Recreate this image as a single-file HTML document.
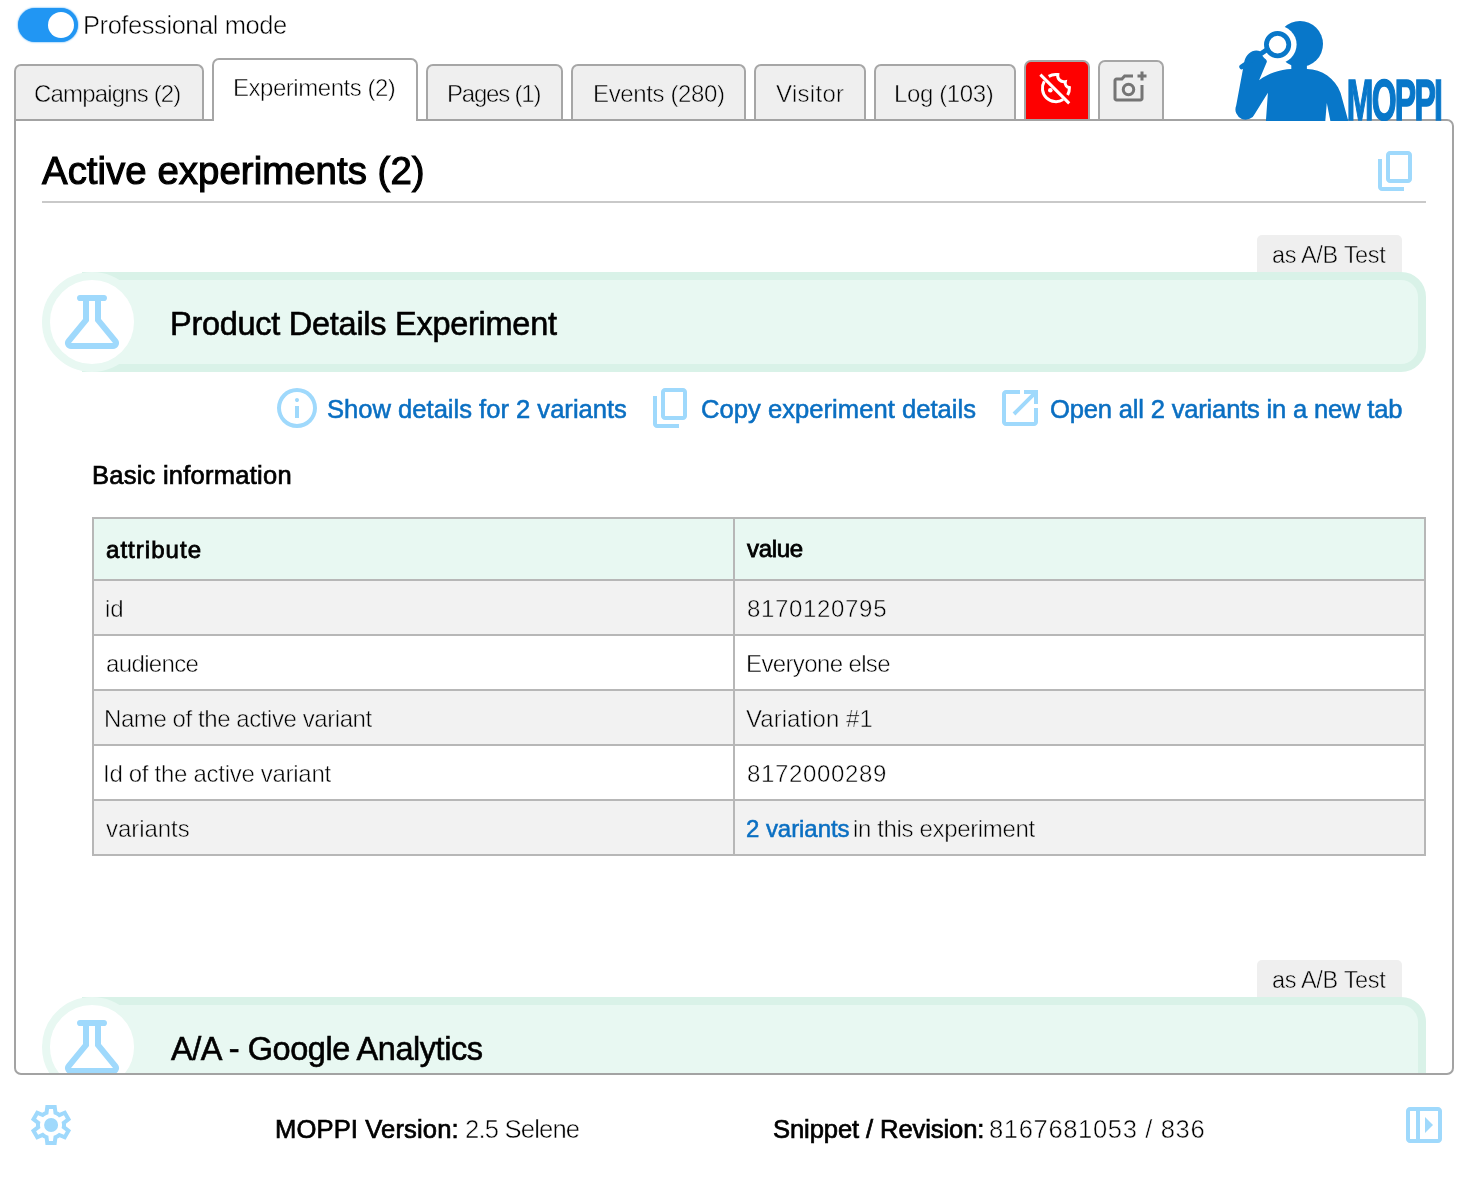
<!DOCTYPE html>
<html lang="en">
<head>
<meta charset="utf-8">
<title>MOPPI</title>
<style>
html,body{margin:0;padding:0;}
body{width:1470px;height:1180px;overflow:hidden;background:#fff;position:relative;
  font-family:"Liberation Sans",sans-serif;color:#000;font-size:24px;}
.abs{position:absolute;}
.t{position:absolute;white-space:nowrap;line-height:1;transform-origin:0 0;will-change:transform;}
svg{display:block;}
.ic{fill:#9fd9fc;}

/* toggle */
#toggle{left:18px;top:8px;width:60px;height:34px;border-radius:17px;background:#2196f3;box-shadow:0 0 2px #2196f3;}
#toggle i{position:absolute;left:30px;top:4px;width:26px;height:26px;border-radius:50%;background:#fff;}

/* tabs */
.tab{position:absolute;top:64px;height:55px;box-sizing:border-box;border:2px solid #a6a6a6;border-bottom:none;
  border-radius:7px 7px 0 0;background:#efefef;}
.tab.active{top:58px;height:63px;background:#fff;z-index:3;}
.tab.icon{top:60px;height:59px;}
.tab.red{background:#fe0000;}

/* panel */
#panel{left:14px;top:119px;width:1440px;height:956px;box-sizing:border-box;border:2px solid #a3a3a3;border-radius:0 7px 7px 7px;
  overflow:hidden;background:#fff;z-index:2;}
#inner{position:absolute;left:-16px;top:-121px;width:1470px;height:1180px;}
#hr{left:42px;top:201px;width:1384px;height:2px;background:#c9c9c9;}

.badge{position:absolute;left:1257px;width:145px;height:37px;background:#efefef;border-radius:5px 5px 0 0;}
.bar{position:absolute;left:82px;width:1344px;height:100px;box-sizing:border-box;border:8px solid #d9f2e8;background:#e8f8f2;
  border-radius:0 25px 25px 0;}
.circ{position:absolute;left:42px;width:100px;height:100px;box-sizing:border-box;border:8px solid #e8f8f2;background:#fff;border-radius:50%;}
.link{color:#0a6fc2;}

/* table */
#tbl{left:92px;top:517px;width:1334px;height:339px;background:#b7b7b7;}
#tbl div{position:absolute;}
.c1{left:2px;width:639px;}
.c2{left:643px;width:689px;}
.hd{top:2px;height:60px;background:#e8f8f2;}
.r1{top:64px;height:53px;background:#f2f2f2;}
.r2{top:119px;height:53px;background:#fff;}
.r3{top:174px;height:53px;background:#f2f2f2;}
.r4{top:229px;height:53px;background:#fff;}
.r5{top:284px;height:53px;background:#f2f2f2;}
</style>
</head>
<body>

<!-- toggle -->
<div id="toggle" class="abs"><i></i></div>
<span class="t" id="t_prof" style="left:83.4px;top:13.41px;font-size:25.5px;letter-spacing:-0.436px;-webkit-text-stroke:0.5px #fff;">Professional mode</span>

<!-- tabs -->
<div class="tab" style="left:14px;width:190px;"></div>
<div class="tab active" style="left:212px;width:206px;"></div>
<div class="tab" style="left:426px;width:137px;"></div>
<div class="tab" style="left:571px;width:175px;"></div>
<div class="tab" style="left:754px;width:112px;"></div>
<div class="tab" style="left:874px;width:142px;"></div>
<div class="tab icon red" style="left:1024px;width:66px;"></div>
<div class="tab icon" style="left:1098px;width:66px;"></div>

<span class="t" id="t_tab1" style="left:34.4px;top:82.11px;z-index:4;letter-spacing:-0.841px;-webkit-text-stroke:0.5px #efefef;">Campaigns (2)</span>
<span class="t" id="t_tab2" style="left:233.0px;top:76.11px;z-index:4;letter-spacing:-0.466px;-webkit-text-stroke:0.5px #fff;">Experiments (2)</span>
<span class="t" id="t_tab3" style="left:447.2px;top:82.11px;z-index:4;letter-spacing:-1.200px;-webkit-text-stroke:0.5px #efefef;">Pages (1)</span>
<span class="t" id="t_tab4" style="left:592.6px;top:82.11px;z-index:4;letter-spacing:-0.379px;-webkit-text-stroke:0.5px #efefef;">Events (280)</span>
<span class="t" id="t_tab5" style="left:775.6px;top:82.11px;z-index:4;letter-spacing:0.305px;-webkit-text-stroke:0.5px #efefef;">Visitor</span>
<span class="t" id="t_tab6" style="left:894.4px;top:82.11px;z-index:4;letter-spacing:-0.375px;-webkit-text-stroke:0.5px #efefef;">Log (103)</span>

<svg class="abs" style="left:1225px;top:10px;z-index:5;will-change:transform;" width="235" height="110.500" viewBox="1225 10 235 110.500">
<g fill="#0877c9">
<circle cx="1300" cy="44.100" r="23"/>
<rect x="1291.300" y="58" width="15.600" height="13"/>
<path d="M1259.100 80.200C1268 73.500 1280 69.300 1291.300 69L1306.900 69C1322 69.500 1335 78 1340.600 92.900L1348.300 121L1265.900 121L1267.900 92.800L1255.200 113.300A9.700 9.700 0 0 1 1236.200 105.500L1244.500 60.700C1246 55 1251 50.400 1256.200 50.400C1262 50.400 1266 55 1266.900 61.700Z"/>
</g>
<path d="M1326.800 103L1325.300 121L1330.400 121Z" fill="#fff"/>
<circle cx="1277.600" cy="44.600" r="19" fill="#fff"/>
<circle cx="1277.600" cy="44.600" r="11.200" fill="#fff" stroke="#0877c9" stroke-width="4.800"/>
<path d="M1241.800 66.800L1267.500 49.300" stroke="#0877c9" stroke-width="5" stroke-linecap="round"/>
<text x="0" y="0" transform="translate(1346.800 119.500) scale(0.556 1)" font-family="Liberation Sans, sans-serif" font-weight="bold" font-size="57.600" letter-spacing="-3.200" fill="#0877c9" stroke="#0877c9" stroke-width="1.600">MOPPI</text>
</svg>
<svg class="abs" style="left:1038px;top:70px;z-index:4;" width="36" height="36" viewBox="0 0 36 36" fill="none" stroke="#fff" stroke-width="3">
<path d="M10.700 6.400A13.500 13.500 0 0 1 19.800 4.600C19 8.500 22.500 12.500 27.300 11.600C26.500 15 29 17.500 31.400 17.600A13.500 13.500 0 0 1 29.600 25"/>
<path d="M6.300 11.300A13.500 13.500 0 0 0 25.100 29.600"/>
<path d="M2.400 4.600L31.200 33.400"/>
<circle cx="12.300" cy="20.300" r="2.300" fill="#fff" stroke="none"/></svg>
<svg class="abs" style="z-index:4;left:1112px;top:70px;" width="36" height="36" viewBox="0 -960 960 960"><path fill="#757575" d="M440-440ZM120-120q-33 0-56.5-23.5T40-200v-480q0-33 23.5-56.5T120-760h126l74-80h240v80H355l-73 80H120v480h640v-360h80v360q0 33-23.5 56.5T760-120H120Zm640-560v-80h-80v-80h80v-80h80v80h80v80h-80v80h-80ZM440-260q75 0 127.5-52.5T620-440q0-75-52.5-127.5T440-620q-75 0-127.5 52.5T260-440q0 75 52.5 127.5T440-260Zm0-80q-42 0-71-29t-29-71q0-42 29-71t71-29q42 0 71 29t29 71q0 42-29 71t-71 29Z"/></svg>

<!-- panel -->
<div id="panel" class="abs"><div id="inner">
  <span class="t" id="t_h1" style="left:42.0px;top:152.49px;font-size:38.4px;font-weight:normal;-webkit-text-stroke:1.1px #000;color:#000;letter-spacing:0.032px;">Active experiments (2)</span>
  <div id="hr" class="abs"></div>

  <div class="badge" style="top:235px;"></div>
  <span class="t" id="t_badge1" style="left:1272.0px;top:243.95px;letter-spacing:-0.340px;-webkit-text-stroke:0.5px #efefef;font-size:23.5px;">as A/B Test</span>
  <div class="bar" style="top:272px;"></div>
  <div class="circ" style="top:272px;"></div>
  <span class="t" id="t_title1" style="left:170.0px;top:308.34px;font-size:32.5px;color:#000;letter-spacing:-0.272px;-webkit-text-stroke:0.6px #000;">Product Details Experiment</span>

  <span class="t link" id="t_a1" style="left:326.8px;top:397.33px;font-size:25.6px;letter-spacing:-0.010px;-webkit-text-stroke:0.55px #0a6fc2;">Show details for 2 variants</span>
  <span class="t link" id="t_a2" style="left:700.8px;top:397.33px;font-size:25.6px;letter-spacing:0.024px;-webkit-text-stroke:0.55px #0a6fc2;">Copy experiment details</span>
  <span class="t link" id="t_a3" style="left:1050.0px;top:397.33px;font-size:25.6px;letter-spacing:-0.195px;-webkit-text-stroke:0.55px #0a6fc2;">Open all 2 variants in a new tab</span>

  <span class="t" id="t_basic" style="left:92.0px;top:463.41px;font-size:25.5px;color:#000;letter-spacing:0.249px;-webkit-text-stroke:0.7px #000;">Basic information</span>

  <div id="tbl" class="abs">
    <div class="c1 hd"></div><div class="c2 hd"></div>
    <div class="c1 r1"></div><div class="c2 r1"></div>
    <div class="c1 r2"></div><div class="c2 r2"></div>
    <div class="c1 r3"></div><div class="c2 r3"></div>
    <div class="c1 r4"></div><div class="c2 r4"></div>
    <div class="c1 r5"></div><div class="c2 r5"></div>
  </div>
  <span class="t" id="t_th1" style="left:105.6px;top:537.68px;font-size:24px;-webkit-text-stroke:0.8px #000;color:#000;letter-spacing:1.041px;">attribute</span>
  <span class="t" id="t_th2" style="left:747.2px;top:536.68px;font-size:24px;-webkit-text-stroke:0.8px #000;color:#000;letter-spacing:-0.350px;">value</span>
  <span class="t" id="t_r1a" style="left:104.6px;top:597.11px;letter-spacing:0.000px;-webkit-text-stroke:0.5px #f2f2f2;">id</span>
  <span class="t" id="t_r1b" style="left:746.8px;top:597.11px;letter-spacing:0.667px;-webkit-text-stroke:0.5px #f2f2f2;">8170120795</span>
  <span class="t" id="t_r2a" style="left:105.6px;top:652.11px;letter-spacing:-0.639px;-webkit-text-stroke:0.5px #fff;">audience</span>
  <span class="t" id="t_r2b" style="left:745.8px;top:652.11px;letter-spacing:-0.627px;-webkit-text-stroke:0.5px #fff;">Everyone else</span>
  <span class="t" id="t_r3a" style="left:104.4px;top:707.11px;letter-spacing:-0.424px;-webkit-text-stroke:0.5px #f2f2f2;">Name of the active variant</span>
  <span class="t" id="t_r3b" style="left:746.2px;top:707.11px;letter-spacing:0.047px;-webkit-text-stroke:0.5px #f2f2f2;">Variation #1</span>
  <span class="t" id="t_r4a" style="left:103.4px;top:762.11px;letter-spacing:-0.291px;-webkit-text-stroke:0.5px #fff;">Id of the active variant</span>
  <span class="t" id="t_r4b" style="left:746.8px;top:762.11px;letter-spacing:0.666px;-webkit-text-stroke:0.5px #fff;">8172000289</span>
  <span class="t" id="t_r5a" style="left:105.6px;top:817.11px;letter-spacing:-0.054px;-webkit-text-stroke:0.5px #f2f2f2;">variants</span>
  <span class="t link" id="t_r5b1" style="left:746.2px;top:817.11px;letter-spacing:-0.053px;-webkit-text-stroke:0.55px #0a6fc2;">2 variants</span>
  <span class="t" id="t_r5b2" style="left:853.4px;top:817.11px;letter-spacing:-0.353px;-webkit-text-stroke:0.5px #f2f2f2;">in this experiment</span>

  <div class="badge" style="top:960px;"></div>
  <span class="t" id="t_badge2" style="left:1272.0px;top:968.95px;letter-spacing:-0.340px;-webkit-text-stroke:0.5px #efefef;font-size:23.5px;">as A/B Test</span>
  <div class="bar" style="top:997px;"></div>
  <div class="circ" style="top:997px;"></div>
  <span class="t" id="t_title2" style="left:170.8px;top:1033.34px;font-size:32.5px;color:#000;letter-spacing:-0.456px;-webkit-text-stroke:0.6px #000;">A/A - Google Analytics</span>
  <svg class="abs" style="left:1372px;top:147px;" width="48" height="48" viewBox="0 -960 960 960"><path class="ic" d="M360-240q-33 0-56.5-23.5T280-320v-480q0-33 23.5-56.5T360-880h360q33 0 56.5 23.5T800-800v480q0 33-23.5 56.5T720-240H360Zm0-80h360v-480H360v480ZM200-80q-33 0-56.5-23.5T120-160v-560h80v560h440v80H200Zm160-240v-480 480Z"/></svg>
  <svg class="abs" style="left:56px;top:286px;" width="72" height="72" viewBox="0 -960 960 960"><path class="ic" d="M200-120q-51 0-72.5-45.5T138-250l222-270v-240h-40q-17 0-28.5-11.5T280-800q0-17 11.5-28.5T320-840h320q17 0 28.5 11.5T680-800q0 17-11.5 28.5T640-760h-40v240l222 270q32 39 10.5 84.5T760-120H200Zm0-80h560L520-492v-268h-80v268L200-200Zm280-280Z"/></svg>
  <svg class="abs" style="left:56px;top:1011px;" width="72" height="72" viewBox="0 -960 960 960"><path class="ic" d="M200-120q-51 0-72.5-45.5T138-250l222-270v-240h-40q-17 0-28.5-11.5T280-800q0-17 11.5-28.5T320-840h320q17 0 28.5 11.5T680-800q0 17-11.5 28.5T640-760h-40v240l222 270q32 39 10.5 84.5T760-120H200Zm0-80h560L520-492v-268h-80v268L200-200Zm280-280Z"/></svg>
  <svg class="abs" style="left:273px;top:384px;" width="48" height="48" viewBox="0 -960 960 960"><path class="ic" d="M440-280h80v-240h-80v240Zm40-320q17 0 28.5-11.5T520-640q0-17-11.5-28.5T480-680q-17 0-28.5 11.5T440-640q0 17 11.5 28.5T480-600Zm0 520q-83 0-156-31.5T197-197q-54-54-85.5-127T80-480q0-83 31.5-156T197-763q54-54 127-85.5T480-880q83 0 156 31.5T763-763q54 54 85.5 127T880-480q0 83-31.5 156T763-197q-54 54-127 85.5T480-80Zm0-80q134 0 227-93t93-227q0-134-93-227t-227-93q-134 0-227 93t-93 227q0 134 93 227t227 93Zm0-320Z"/></svg>
  <svg class="abs" style="left:647px;top:384px;" width="48" height="48" viewBox="0 -960 960 960"><path class="ic" d="M360-240q-33 0-56.5-23.5T280-320v-480q0-33 23.5-56.5T360-880h360q33 0 56.5 23.5T800-800v480q0 33-23.5 56.5T720-240H360Zm0-80h360v-480H360v480ZM200-80q-33 0-56.5-23.5T120-160v-560h80v560h440v80H200Zm160-240v-480 480Z"/></svg>
  <svg class="abs" style="left:996px;top:384px;" width="48" height="48" viewBox="0 -960 960 960"><path class="ic" d="M200-120q-33 0-56.5-23.5T120-200v-560q0-33 23.5-56.5T200-840h280v80H200v560h560v-280h80v280q0 33-23.5 56.5T760-120H200Zm188-212-56-56 372-372H560v-80h280v280h-80v-144L388-332Z"/></svg>
</div></div>

<!-- footer -->
<span class="t" id="t_f1b" style="left:275.4px;top:1117.33px;font-size:25.6px;font-weight:normal;-webkit-text-stroke:0.7px #000;color:#000;letter-spacing:0.121px;">MOPPI Version:</span>
<span class="t" id="t_f1r" style="left:464.6px;top:1117.33px;font-size:25.6px;letter-spacing:-0.811px;-webkit-text-stroke:0.5px #fff;">2.5 Selene</span>
<span class="t" id="t_f2b" style="left:773.2px;top:1117.33px;font-size:25.6px;font-weight:normal;-webkit-text-stroke:0.7px #000;color:#000;letter-spacing:-0.112px;">Snippet / Revision:</span>
<span class="t" id="t_f2r" style="left:989.2px;top:1117.33px;font-size:25.6px;letter-spacing:0.619px;-webkit-text-stroke:0.5px #fff;">8167681053 / 836</span>
<svg class="abs" style="left:27px;top:1101px;" width="48" height="48" viewBox="0 -960 960 960"><path class="ic" d="m370-80-16-128q-13-5-24.5-12T307-235l-119 50L78-375l103-78q-1-7-1-13.5v-27q0-6.5 1-13.5L78-585l110-190 119 50q11-8 23-15t24-12l16-128h220l16 128q13 5 24.5 12t22.5 15l119-50 110 190-103 78q1 7 1 13.5v27q0 6.5-2 13.5l103 78-110 190-118-50q-11 8-23 15t-24 12L590-80H370Zm70-80h79l14-106q31-8 57.5-23.5T639-327l99 41 39-68-86-65q5-14 7-29.5t2-31.5q0-16-2-31.5t-7-29.5l86-65-39-68-99 42q-22-23-48.5-38.5T533-694l-13-106h-79l-14 106q-31 8-57.5 23.5T321-633l-99-41-39 68 86 64q-5 15-7 30t-2 32q0 16 2 31t7 30l-86 65 39 68 99-42q22 23 48.5 38.5T427-266l13 106Zm42-180q58 0 99-41t41-99q0-58-41-99t-99-41q-59 0-99.5 41T342-480q0 58 40.5 99t99.5 41Zm-2-140Z"/></svg>
<svg class="abs" style="left:1400px;top:1101px;" width="48" height="48" viewBox="0 -960 960 960"><path class="ic" d="M500-640v320l160-160-160-160ZM200-120q-33 0-56.5-23.5T120-200v-560q0-33 23.5-56.5T200-840h560q33 0 56.5 23.5T840-760v560q0 33-23.5 56.5T760-120H200Zm120-80v-560H200v560h120Zm80 0h360v-560H400v560Zm-80 0H200h120Z"/></svg>

</body>
</html>
